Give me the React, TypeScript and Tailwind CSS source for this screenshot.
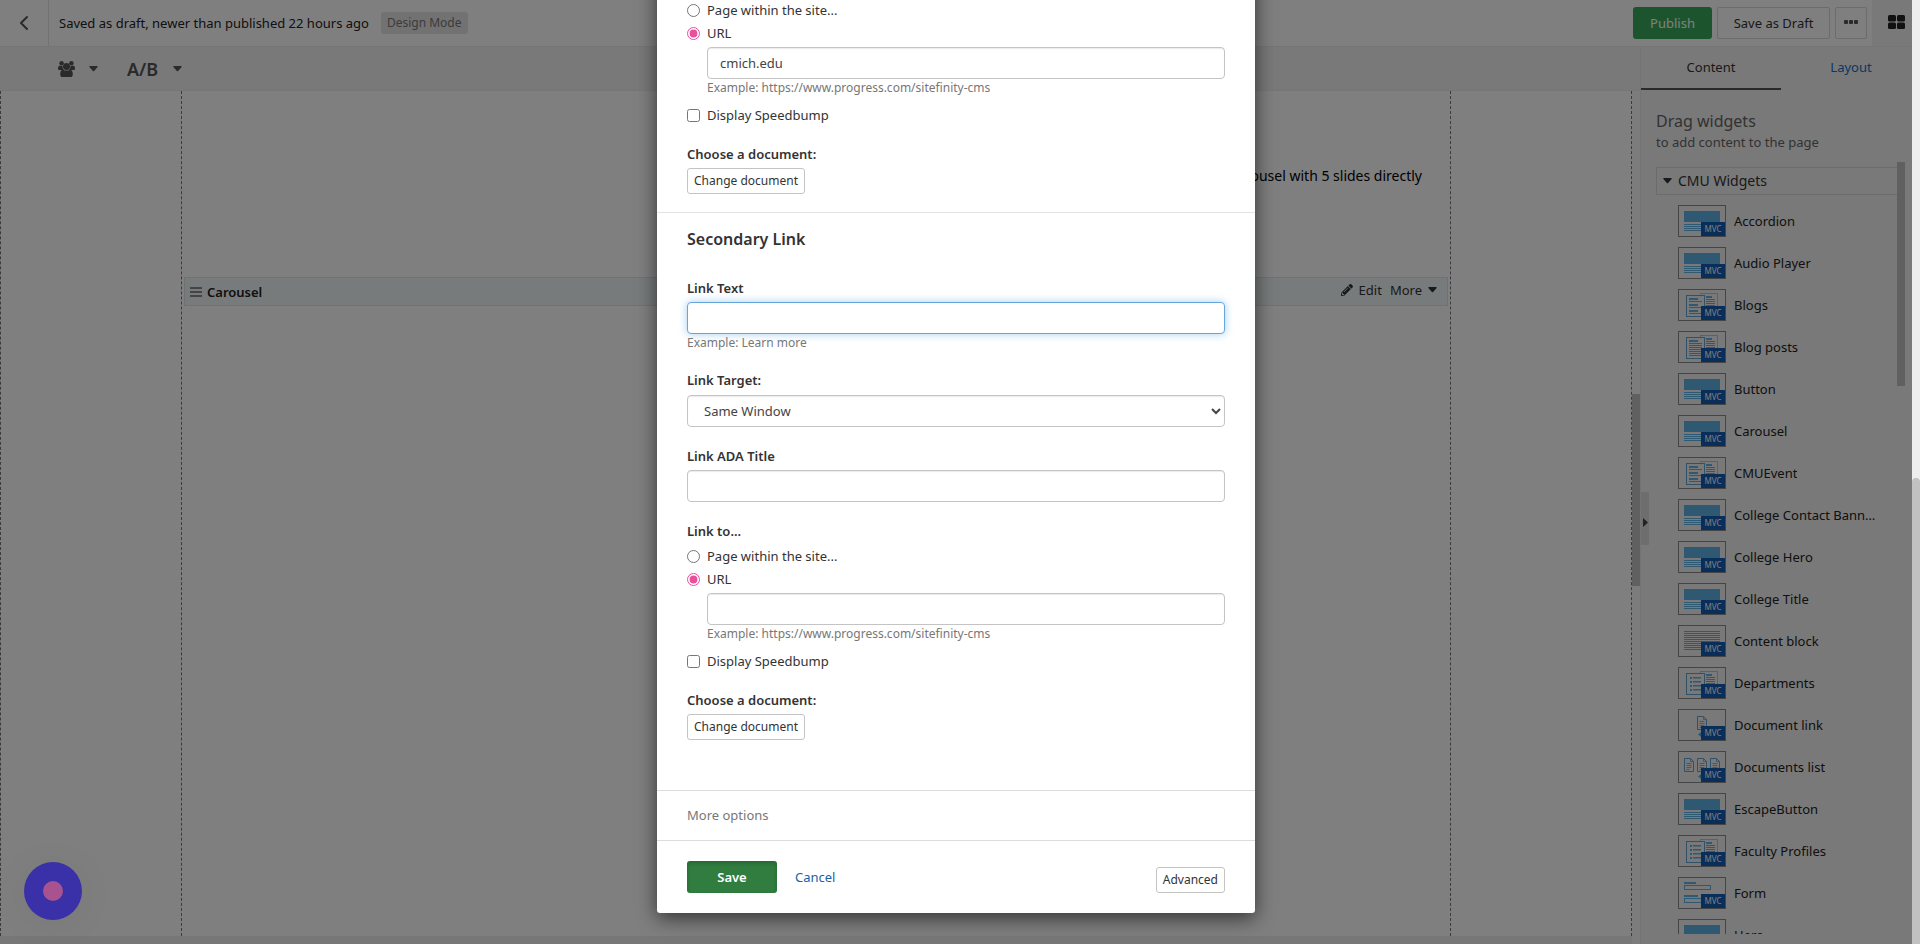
import React, { useState } from 'react'
import { ChevronLeft } from 'lucide-react'
import { FaPencilAlt } from 'react-icons/fa'

type ThumbKind = 'banner' | 'news' | 'posts' | 'event' | 'text' | 'list' | 'document' | 'documents' | 'form'

interface Widget {
  name: string
  kind: ThumbKind
}

const widgets: Widget[] = [
  { name: 'Accordion', kind: 'banner' },
  { name: 'Audio Player', kind: 'banner' },
  { name: 'Blogs', kind: 'news' },
  { name: 'Blog posts', kind: 'posts' },
  { name: 'Button', kind: 'banner' },
  { name: 'Carousel', kind: 'banner' },
  { name: 'CMUEvent', kind: 'event' },
  { name: 'College Contact Banner', kind: 'banner' },
  { name: 'College Hero', kind: 'banner' },
  { name: 'College Title', kind: 'banner' },
  { name: 'Content block', kind: 'text' },
  { name: 'Departments', kind: 'list' },
  { name: 'Document link', kind: 'document' },
  { name: 'Documents list', kind: 'documents' },
  { name: 'EscapeButton', kind: 'banner' },
  { name: 'Faculty Profiles', kind: 'list' },
  { name: 'Form', kind: 'form' },
  { name: 'Hero', kind: 'banner' },
]

const inputClass =
  'block h-8 w-full rounded border border-[#c4c4c4] bg-white px-3 text-[13px] text-[#444] shadow-[inset_0_1px_1px_rgba(0,0,0,0.08)] outline-none'

const smallButtonClass =
  'block h-[26px] rounded-[3px] border border-[#c4c4c4] bg-white px-1.5 text-xs text-[#333]'

export default function App() {
  return (
    <div className="flex h-screen overflow-hidden font-['Noto_Sans',sans-serif] text-[13px] leading-5 text-[#333]">
      <div className="relative flex min-w-0 flex-1 flex-col bg-white">
        <Header />
        <div className="flex min-h-0 flex-1">
          <div className="flex min-w-0 flex-1 flex-col">
            <Toolbar />
            <Canvas />
          </div>
          <Sidebar />
        </div>

        {/* Dialog and its backdrop */}
        <div className="absolute inset-0 z-10 flex items-end justify-center overflow-hidden bg-black/50 pb-[31px]">
          <LinkDialog />
        </div>

        <button
          aria-label="Open assistant"
          className="absolute bottom-6 left-6 z-20 flex size-[58px] items-center justify-center rounded-full bg-[#3a30a8] shadow-[0_4px_40px_rgba(0,0,0,0.06)]"
        >
          <span className="size-5 rounded-full bg-[#a8528f]" />
        </button>
      </div>

      {/* Window scrollbar */}
      <div className="flex w-2 flex-col justify-end bg-[#eeeeee]">
        <div className="h-[466px] rounded-t bg-[#c1c1c1]" />
      </div>
    </div>
  )
}

function Caret({ className = '' }: { className?: string }) {
  return (
    <svg className={className} width="9" height="6" viewBox="0 0 9 6" fill="currentColor" aria-hidden="true">
      <path d="M0.8 0h7.4q.8.2.4.9L5.1 5q-.6.6-1.2 0L.4.9Q0 .2.8 0z" />
    </svg>
  )
}

function Header() {
  return (
    <header className="flex h-[46px] shrink-0 items-center">
      <button aria-label="Back" className="flex h-full w-[49px] items-center justify-center border-r border-[#e4e4e4] text-[#555]">
        <ChevronLeft className="size-6" />
      </button>
      <span className="ml-[10px] text-[#222]">Saved as draft, newer than published 22 hours ago</span>
      <span className="ml-3 flex h-[22px] items-center rounded-[3px] bg-[#e4e4e4] px-1.5 text-xs text-[#777]">
        Design Mode
      </span>
      <div className="ml-auto flex h-full items-center gap-[5px]">
        <button className="h-8 w-[79px] rounded-[3px] bg-[#38ab5a] text-white">Publish</button>
        <button className="h-8 w-[113px] rounded-[2px] border border-[#d8d8d8] text-[#333]">Save as Draft</button>
        <button aria-label="More actions" className="flex h-8 w-8 items-center justify-center rounded-[2px] border border-[#d8d8d8] pb-0.5 text-[#555]">
          <svg width="14" height="4" viewBox="0 0 14 4" fill="currentColor">
            <rect width="4" height="4" rx="1" />
            <rect x="5" width="4" height="4" rx="1" />
            <rect x="10" width="4" height="4" rx="1" />
          </svg>
        </button>
        <button aria-label="Widgets panel" className="flex h-full w-10 items-center justify-end bg-[#f2f2f2] pb-0.5 pr-[7px] text-[#222]">
          <svg width="17" height="14" viewBox="0 0 17 14" fill="currentColor">
            <rect width="8" height="6.5" rx="1.5" />
            <rect x="9" width="8" height="6.5" rx="1.5" />
            <rect y="7.5" width="8" height="6.5" rx="1.5" />
            <rect x="9" y="7.5" width="8" height="6.5" rx="1.5" />
          </svg>
        </button>
      </div>
    </header>
  )
}

function Toolbar() {
  return (
    <div className="flex h-[45px] shrink-0 items-center border-y border-[#ececec] bg-[#f2f2f2] pl-[58px] text-[#555]">
      <button aria-label="Personalization" className="flex items-center gap-[14px]">
        <svg width="17" height="16" viewBox="0 0 17 16" fill="currentColor">
          <circle cx="3.6" cy="2.2" r="2.2" />
          <circle cx="13.4" cy="2.2" r="2.2" />
          <circle cx="8.5" cy="5.6" r="3.5" />
          <path d="M0 7.4C0 5.4 1 4.4 2 4.4c1 .8 1.9.8 2.6.5C4.6 7 5 8 5.9 9H1.500C.5 9 0 8.400 0 7.400z" />
          <path d="M17 7.400c0-2-1-3-2-3-1 .8-1.900.8-2.600.5 0 2.100-.4 3.100-1.300 4.100h4.400c1 0 1.500-.6 1.500-1.600z" />
          <path d="M2.200 13.400c0-3 .9-4.800 2.700-5 2.200 1.600 5 1.600 7.200 0 1.800.2 2.700 2 2.700 5 0 1.600-1 2.600-2.500 2.600H4.700c-1.500 0-2.500-1-2.500-2.600z" />
        </svg>
        <Caret />
      </button>
      <button aria-label="A/B test" className="ml-[29px] flex items-center gap-[15px]">
        <span className="text-lg font-semibold">A/B</span>
        <Caret />
      </button>
    </div>
  )
}

function Canvas() {
  return (
    <div className="flex min-h-0 flex-1">
      <div className="flex min-w-0 flex-1 flex-col">
        <div className="flex min-h-0 flex-1">
          <div className="w-[181px] border-l border-dashed border-[#777]" />
          <div className="flex min-w-0 flex-1 flex-col border-x border-dashed border-[#777]">
            <p className="mt-[75px] pr-7 text-right text-sm text-black">
              Insert a carousel with 5 slides directly
            </p>
            <div className="mx-[2px] mt-[91px] flex h-[29px] items-center border border-[#dde6e4] bg-[#f1f7f6] pl-[5px] pr-2.5">
              <svg width="12" height="10" viewBox="0 0 12 10" fill="#888" aria-hidden="true">
                <rect width="12" height="2" />
                <rect y="4" width="12" height="2" />
                <rect y="8" width="12" height="2" />
              </svg>
              <span className="ml-[5px] font-semibold text-[#222]">Carousel</span>
              <div className="ml-auto flex gap-2 pb-1">
                <button className="flex items-center gap-1.5">
                  <FaPencilAlt className="size-3" />
                  Edit
                </button>
                <button className="flex items-center gap-1.5">
                  More
                  <Caret />
                </button>
              </div>
            </div>
          </div>
          <div className="w-[181px] border-r border-dashed border-[#777]" />
        </div>
        <div className="h-2 shrink-0 bg-[#eeeeee]" />
      </div>
      <div className="w-2 shrink-0 bg-[#f8f8f8] pt-[303px]">
        <div className="h-48 bg-[#c1c1c1]" />
      </div>
    </div>
  )
}

function Sidebar() {
  const [tab, setTab] = useState('Content')

  return (
    <aside className="relative flex w-[272px] shrink-0 flex-col overflow-hidden border-l border-[#e9e9e9] bg-[#f2f2f2]">
      <nav className="flex h-11 shrink-0 border-t border-[#ececec]">
        {['Content', 'Layout'].map((name) => (
          <button
            key={name}
            onClick={() => setTab(name)}
            className={`h-full w-[140px] shrink-0 border-b-2 pb-0.5 ${
              tab === name ? 'border-[#555] text-[#333]' : 'border-transparent text-[#1470c8]'
            }`}
          >
            {name}
          </button>
        ))}
      </nav>
      <h2 className="mt-5 pl-[15px] text-base leading-[22px] text-[#666]">Drag widgets</h2>
      <p className="pl-[15px] text-[#666]">to add content to the page</p>
      <div className="my-2.5 flex min-h-0 flex-1 pl-[15px] pr-[7px]">
        <div className="min-w-0 flex-1 overflow-hidden pt-[5px]">
          <button className="flex h-7 w-full items-center gap-1.5 border border-r-0 border-[#d8d8d8] pl-1.5 text-sm text-[#333]">
            <Caret />
            CMU Widgets
          </button>
          <ul className="pl-[22px] pr-5 pt-[5px]">
            {widgets.map((widget) => (
              <li key={widget.name} className="flex h-[42px] items-center gap-2">
                <Thumb kind={widget.kind} />
                <span className="truncate text-[#222]">{widget.name}</span>
              </li>
            ))}
          </ul>
        </div>
        <div className="w-2 shrink-0">
          <div className="h-56 bg-[#c1c1c1]" />
        </div>
      </div>
      <button
        aria-label="Collapse panel"
        className="absolute left-0 top-[446px] flex h-[53px] w-2 items-end justify-center bg-[#dcdcdc] pb-[18px] text-[#444]"
      >
        <svg width="5" height="9" viewBox="0 0 5 9" fill="currentColor">
          <path d="M0 0l5 4.500-5 4.500z" />
        </svg>
      </button>
    </aside>
  )
}

function Thumb({ kind }: { kind: ThumbKind }) {
  return (
    <div className="relative h-8 w-12 shrink-0 border border-[#8a8a8a] bg-[#f2f2f2]">
      <svg width="46" height="30" viewBox="0 0 46 30" fill="#5fb0e6" stroke="none" aria-hidden="true">
        {kind === 'banner' && (
          <>
            <rect x="5" y="5" width="36" height="11" />
            {[18, 20, 22, 24].map((y) => (
              <rect key={y} x="5" y={y} width="36" height="1" />
            ))}
          </>
        )}
        {kind === 'text' &&
          [5, 7, 9, 11, 13, 15, 17, 19, 21, 23].map((y) => <rect key={y} x="5" y={y} width="36" height="1" />)}
        {(kind === 'news' || kind === 'posts' || kind === 'event' || kind === 'list') && <Pages kind={kind} />}
        {kind === 'document' && <DocumentIcon x={18} y={6} />}
        {kind === 'documents' && (
          <>
            <DocumentIcon x={5} y={6} />
            <DocumentIcon x={18} y={6} />
            <DocumentIcon x={31} y={6} />
          </>
        )}
        {(kind === 'document' || kind === 'documents') && <path d="M22 22l-3 2.500 3 2.500z" />}
        {kind === 'form' && (
          <>
            <rect x="5" y="4" width="12" height="2" />
            <rect x="5.500" y="7.500" width="26" height="4" fill="none" stroke="#5fb0e6" />
            <rect x="5" y="17" width="14" height="2" />
            <rect x="5.500" y="20.500" width="26" height="4" fill="none" stroke="#5fb0e6" />
          </>
        )}
      </svg>
      <span className="absolute bottom-0 right-0 flex h-3.5 w-6 items-center justify-center bg-[#135cb4] text-[8px] leading-none text-white">
        MVC
      </span>
    </div>
  )
}

function Pages({ kind }: { kind: ThumbKind }) {
  return (
    <>
      <rect x="21.500" y="3.500" width="17" height="20" fill="none" stroke="#a5cbe6" />
      <rect x="27" y="6" width="6" height="2" />
      {[9, 11, 13, 15].map((y) => (
        <rect key={y} x="27" y={y} width="9" height="1" />
      ))}
      <rect x="7.500" y="5.500" width="18" height="21" fill="#f2f2f2" stroke="#5fa3d3" />
      {kind === 'list' &&
        [9, 13, 17, 21].map((y) => (
          <React.Fragment key={y}>
            <rect x="11" y={y} width="2" height="2" />
            <rect x="14" y={y} width="8" height="1.500" />
          </React.Fragment>
        ))}
      {kind === 'posts' && (
        <>
          <rect x="10" y="8" width="9" height="2" />
          {[11, 13, 15, 17, 19, 21, 23].map((y) => (
            <rect key={y} x="10" y={y} width="13" height="1" />
          ))}
        </>
      )}
      {(kind === 'news' || kind === 'event') &&
        [8, 14, 20].map((y) => (
          <React.Fragment key={y}>
            <rect x="10" y={y} width="9" height="2" />
            <rect x="10" y={y + 3} width="13" height="1" />
          </React.Fragment>
        ))}
    </>
  )
}

function DocumentIcon({ x, y }: { x: number; y: number }) {
  return (
    <g transform={`translate(${x} ${y})`} fill="none" stroke="#5fa3d3">
      <path d="M.5.5h6l3 3v10h-9z" />
      <path d="M6.500.5v3h3M2.500 5.500h5M2.500 7.500h5M2.500 9.500h5M2.500 11.500h3" strokeWidth="0.800" />
    </g>
  )
}

function LinkTo({ name, value }: { name: string; value: string }) {
  const [target, setTarget] = useState('url')

  return (
    <>
      <label className="flex items-center gap-[7px]">
        <input
          type="radio"
          name={name}
          checked={target === 'page'}
          onChange={() => setTarget('page')}
          className="size-[13px] accent-[#e8509c]"
        />
        Page within the site...
      </label>
      <label className="mb-1 mt-[3px] flex items-center gap-[7px]">
        <input
          type="radio"
          name={name}
          checked={target === 'url'}
          onChange={() => setTarget('url')}
          className="size-[13px] accent-[#e8509c]"
        />
        URL
      </label>
      <div className="pl-5">
        <input type="text" aria-label="URL" defaultValue={value} className={inputClass} />
        <p className="text-xs leading-[18px] text-[#777]">Example: https://www.progress.com/sitefinity-cms</p>
      </div>
      <label className="mt-2 flex items-center gap-[7px]">
        <input type="checkbox" className="size-[13px]" />
        Display Speedbump
      </label>
      <p className="mb-1 mt-[19px] font-semibold">Choose a document:</p>
      <button className={smallButtonClass}>Change document</button>
    </>
  )
}

function LinkDialog() {
  return (
    <div
      role="dialog"
      aria-label="Edit links"
      className="w-[598px] shrink-0 rounded-[3px] bg-white shadow-[0_5px_20px_rgba(0,0,0,0.6)]"
    >
      <section className="px-[30px] pb-[18px] pt-8">
        <LinkTo name="primary-link" value="cmich.edu" />
      </section>

      <section className="border-t border-[#e4e4e4] px-[30px] pb-[50px] pt-3.5">
        <h3 className="text-base font-semibold leading-6">Secondary Link</h3>

        <label htmlFor="link-text" className="mb-1 mt-[27px] block font-semibold">
          Link Text
        </label>
        <input
          id="link-text"
          type="text"
          className="block h-8 w-full rounded border border-[#66a6da] bg-white px-3 text-[13px] shadow-[0_0_8px_rgba(102,175,233,0.6)] outline-none"
        />
        <p className="text-xs leading-[18px] text-[#777]">Example: Learn more</p>

        <label htmlFor="link-target" className="mb-[5px] mt-[18px] block font-semibold">
          Link Target:
        </label>
        <select id="link-target" className={inputClass}>
          <option>Same Window</option>
          <option>New Window</option>
        </select>

        <label htmlFor="link-ada" className="mb-1 mt-[19px] block font-semibold">
          Link ADA Title
        </label>
        <input id="link-ada" type="text" className={inputClass} />

        <p className="mb-[5px] mt-[19px] font-semibold">Link to...</p>
        <LinkTo name="secondary-link" value="" />
      </section>

      <div className="border-t border-[#dcdcdc] px-[30px] pb-[15px] pt-[14px]">
        <button className="block text-[#777]">More options</button>
      </div>

      <footer className="flex items-end border-t border-[#dcdcdc] px-[30px] py-5">
        <button className="h-8 w-[90px] rounded-[3px] bg-[#307d3f] font-semibold text-white shadow-[inset_0_2px_4px_rgba(0,0,0,0.2)]">
          Save
        </button>
        <button className="ml-[18px] h-8 text-[#1a5fa8]">Cancel</button>
        <button className={`${smallButtonClass} ml-auto`}>Advanced</button>
      </footer>
    </div>
  )
}
